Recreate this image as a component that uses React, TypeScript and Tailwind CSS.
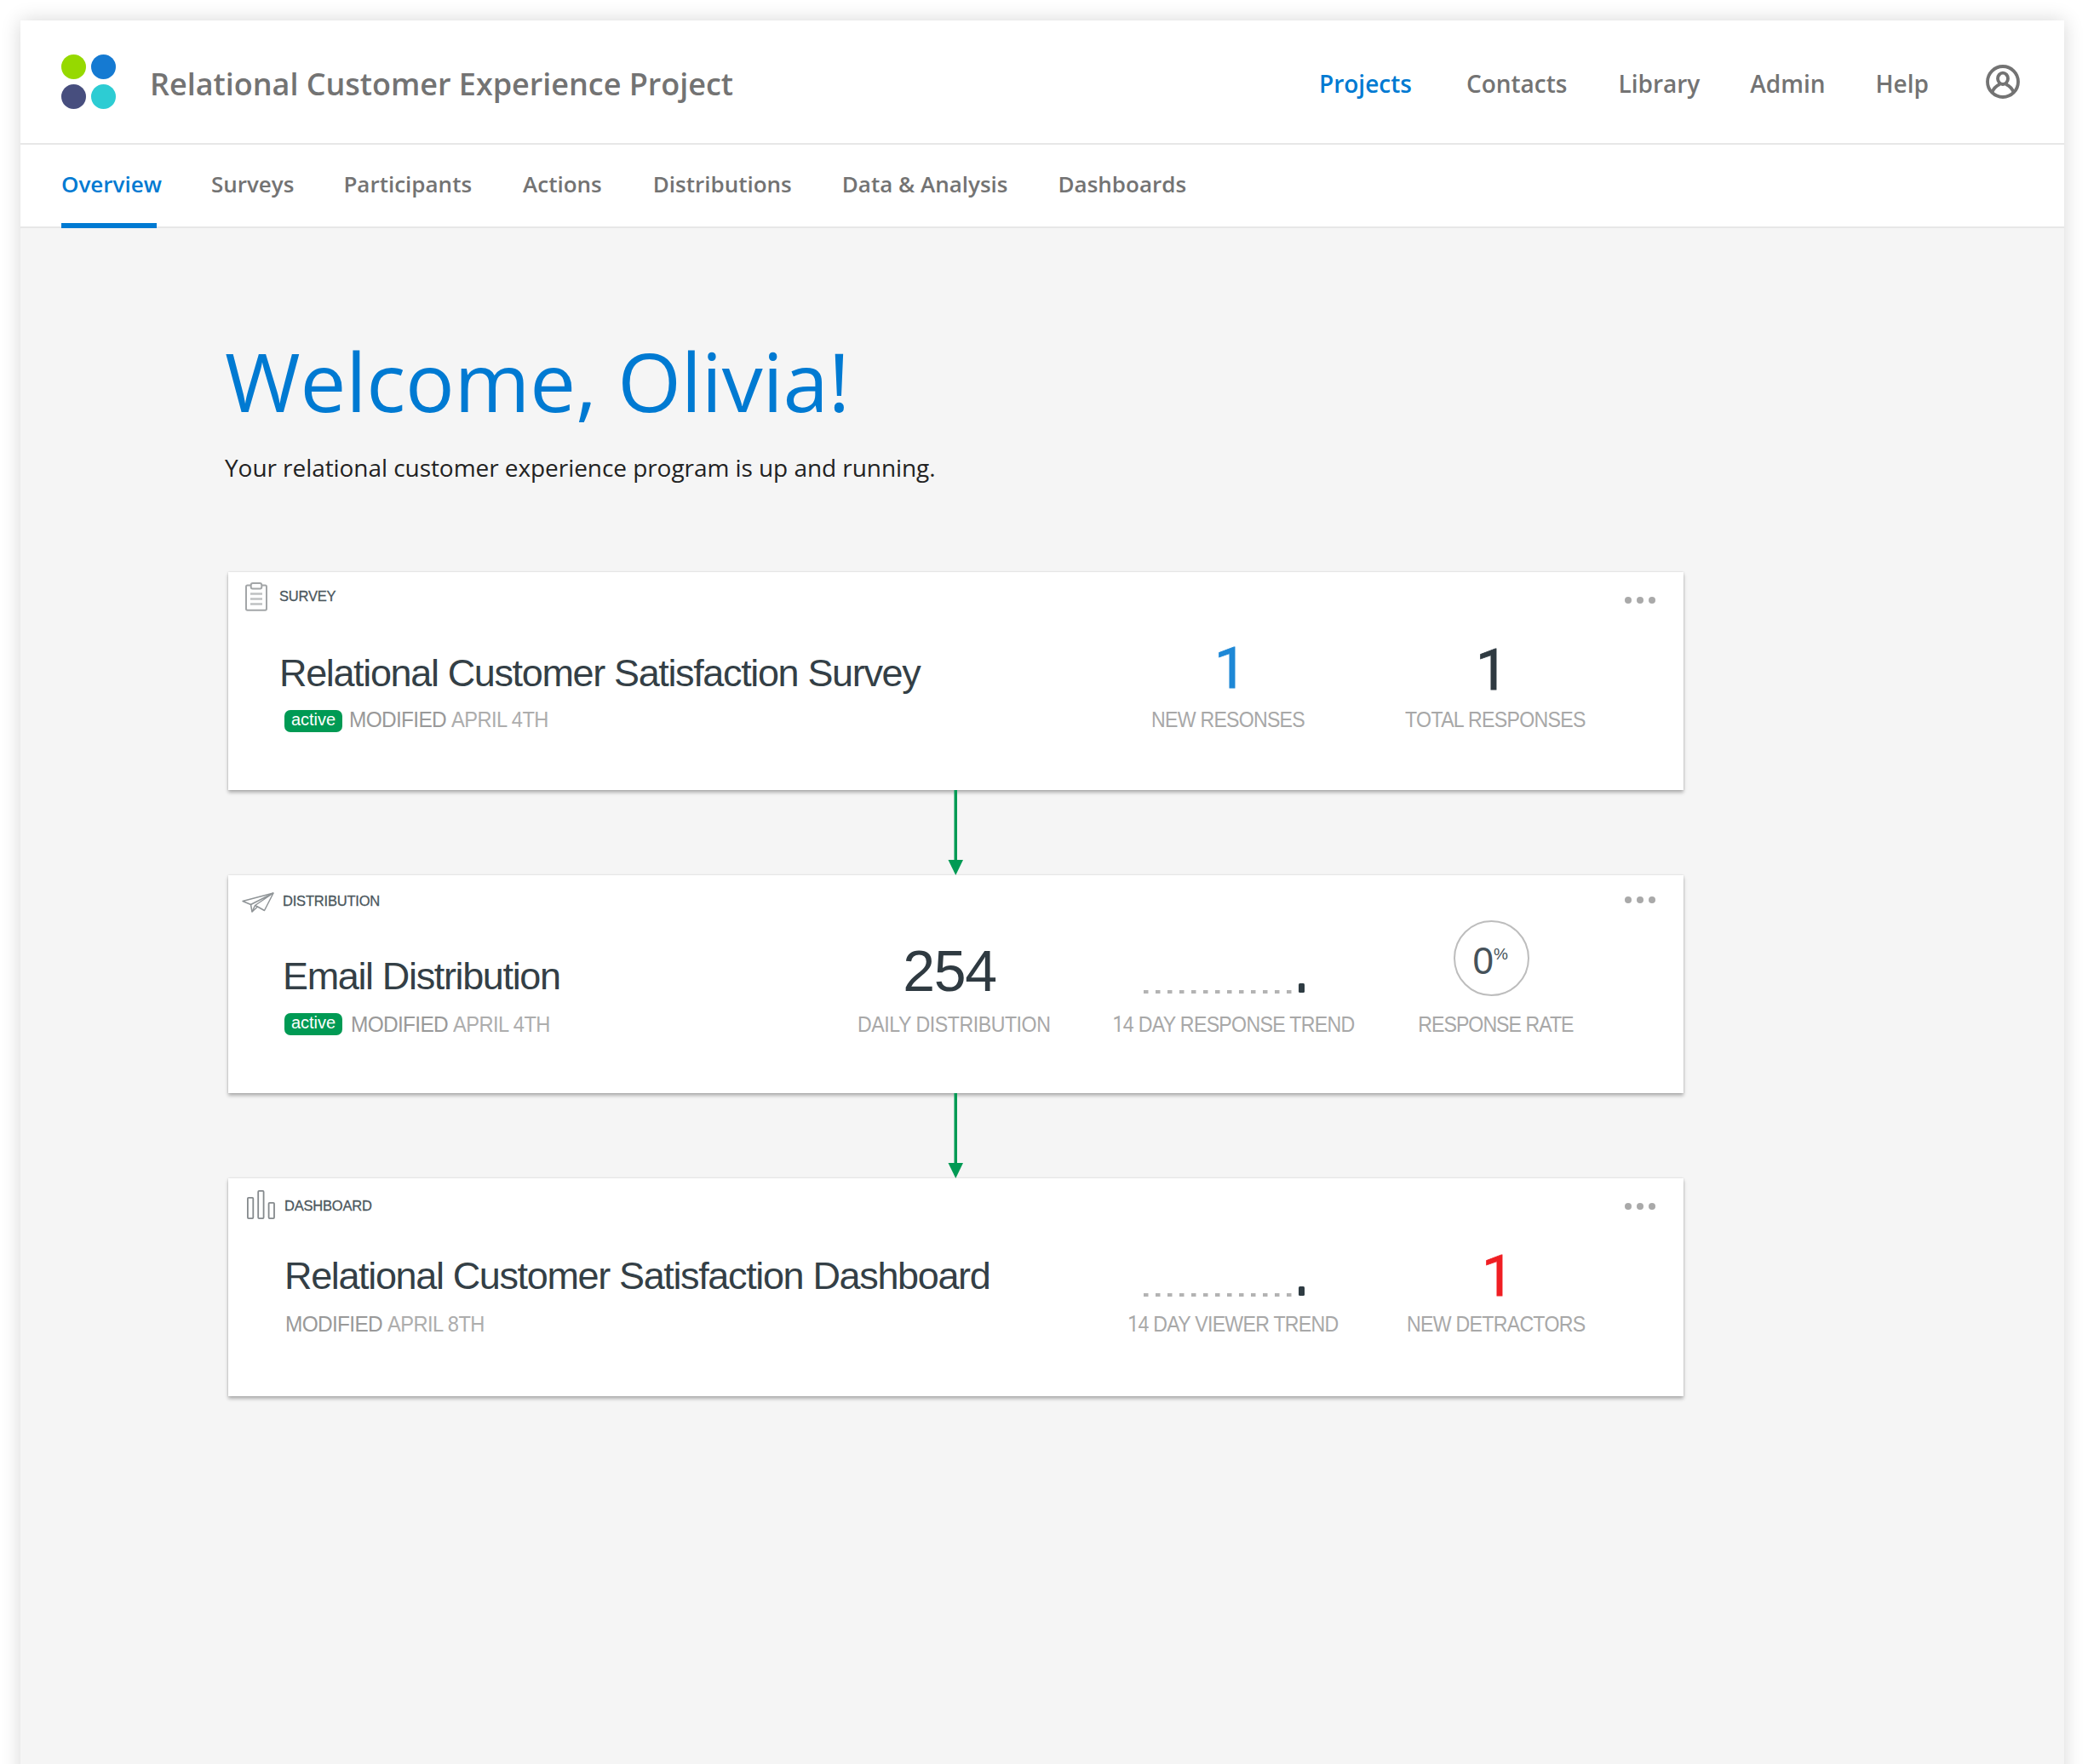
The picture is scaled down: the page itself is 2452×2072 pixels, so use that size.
import type { ReactNode } from 'react'

const navItems = [
  { label: 'Projects', className: 'text-[#007ad2]' },
  { label: 'Contacts', className: 'ml-16' },
  { label: 'Library', className: 'ml-15' },
  { label: 'Admin', className: 'ml-[59px]' },
  { label: 'Help', className: 'ml-[59px]' },
]

const tabs = [
  { label: 'Overview', className: 'relative text-[#007ad2]' },
  { label: 'Surveys', className: 'ml-[58px]' },
  { label: 'Participants', className: 'ml-[58px]' },
  { label: 'Actions', className: 'ml-[60px]' },
  { label: 'Distributions', className: 'ml-[60px]' },
  { label: 'Data & Analysis', className: 'ml-[59px]' },
  { label: 'Dashboards', className: 'ml-[59px]' },
]

function Logo() {
  return (
    <div className="grid h-16 w-16 grid-cols-2 gap-[6px]">
      <span className="rounded-full bg-[#96d900]" />
      <span className="rounded-full bg-[#157ad2]" />
      <span className="rounded-full bg-[#474e7e]" />
      <span className="rounded-full bg-[#2dccd3]" />
    </div>
  )
}

function UserIcon() {
  return (
    <svg className="h-10 w-10" viewBox="0 0 120 120" fill="none" stroke="#737373" strokeWidth="11.5">
      <circle cx="60" cy="60" r="54" />
      <ellipse cx="60" cy="49" rx="18" ry="20" />
      <path d="M22 98C27 84 38 74 49 69M98 98C93 84 82 74 71 69" />
    </svg>
  )
}

function ClipboardIcon() {
  return (
    <svg className="h-[34px] w-[26px]" viewBox="0 0 26 34" fill="none" stroke="#a3a6a8" strokeWidth="2">
      <path d="M7 3.5H2.6Q1 3.5 1 5.2V31Q1 32.8 2.6 32.8H23.4Q25 32.8 25 31V5.2Q25 3.5 23.4 3.5H19" />
      <path d="M9 1H17Q19.3 1 19.3 3.4V5.4Q19.3 7.4 17.3 7.4H8.7Q6.7 7.4 6.7 5.4V3.4Q6.7 1 9 1Z" />
      <path d="M6 13.5H20M6 19.500H20M6 25.500H20" stroke="#bfc1c2" strokeWidth="2.500" />
    </svg>
  )
}

function PlaneIcon() {
  return (
    <svg className="h-6 w-[38px]" viewBox="0 0 38 24" fill="none" stroke="#8f9497" strokeWidth="1.5" strokeLinejoin="round">
      <path d="M1 10.5L37 1L26.5 21.5L18.5 17L12 23L10.5 14.5Z" />
      <path d="M37 1L10.5 14.5M37 1L15.5 15.5L12 23M15.5 15.5L18.5 17" />
    </svg>
  )
}

function BarsIcon() {
  return (
    <svg className="h-[34px] w-[33px]" viewBox="0 0 33 34" fill="none" stroke="#858a8d" strokeWidth="1.8">
      <rect x="0.9" y="8.8" width="6.4" height="24.3" rx="1" />
      <rect x="13.2" y="0.9" width="6.4" height="32.2" rx="1" />
      <rect x="25.6" y="14.8" width="6.4" height="18.3" rx="1" />
    </svg>
  )
}

function MoreDots({ className }: { className: string }) {
  return (
    <div className={`ml-auto mr-[33px] flex gap-[6px] ${className}`}>
      <span className="size-2 rounded-full bg-[#a9a9a9]" />
      <span className="size-2 rounded-full bg-[#a9a9a9]" />
      <span className="size-2 rounded-full bg-[#a9a9a9]" />
    </div>
  )
}

function Trend({ className }: { className: string }) {
  return (
    <svg className={`h-3 w-[190px] ${className}`} viewBox="0 0 190 12">
      {Array.from({ length: 13 }, (_, i) => (
        <rect key={i} x={i * 14} y="8" width="5.5" height="4" fill="#b3b3b3" />
      ))}
      <rect x="182" y="0" width="7" height="11" rx="1.5" fill="#2f3c43" />
    </svg>
  )
}

function Connector() {
  return (
    <svg className="relative ml-1 h-[100px] w-[1709px]" viewBox="0 0 1709 100" fill="#009a54">
      <rect x="852.5" y="0" width="3.5" height="86" />
      <path d="M845.5 82H863L854.3 100Z" />
    </svg>
  )
}

function Card({ children }: { children: ReactNode }) {
  return (
    <section className="ml-1 flex h-64 w-[1709px] flex-col bg-white font-['Liberation_Sans',sans-serif] shadow-[0_3px_4px_rgba(0,0,0,0.28),0_0_2px_rgba(0,0,0,0.15)]">
      {children}
    </section>
  )
}

function CardTop({ icon, label, labelClass, dotsClass }: { icon: ReactNode; label: string; labelClass: string; dotsClass: string }) {
  return (
    <div className="flex h-[50px] shrink-0 items-start">
      {icon}
      <span className={`text-[16.5px] leading-5 tracking-[-0.200px] text-[#4b575d] [-webkit-text-stroke:0.3px_#4b575d] ${labelClass}`}>{label}</span>
      <MoreDots className={dotsClass} />
    </div>
  )
}

function Title({ children }: { children: string }) {
  return (
    <h2 className="translate-y-px whitespace-nowrap text-[45px] leading-[52px] tracking-[-1.360px] text-[#343f46]">{children}</h2>
  )
}

function Modified({ date }: { date: string }) {
  return (
    <div className="flex text-[26px] leading-8">
      <span className="w-[120px] origin-left scale-x-[0.94] tracking-[-0.730px] text-[#999999]">MODIFIED</span>
      <span className="origin-left scale-x-[0.91] whitespace-nowrap tracking-[-0.600px] text-[#adadad]">{date}</span>
    </div>
  )
}

function Badge({ className }: { className: string }) {
  return (
    <span className={`flex h-[26px] w-[68px] shrink-0 justify-center rounded-[7px] bg-[#009a54] text-xl leading-[22px] text-white ${className}`}>
      active
    </span>
  )
}

function StatLabel({ children, className }: { children: ReactNode; className: string }) {
  return <div className={`scale-x-[0.89] whitespace-nowrap text-[26px] leading-8 text-[#a8a8a8] ${className}`}>{children}</div>
}

function One({ className }: { className: string }) {
  return (
    <div className={`font-['Roboto',sans-serif] text-[67.5px] leading-[68px] [-webkit-text-stroke:0.8px_currentColor] ${className}`}>
      1
    </div>
  )
}

function SmallOne() {
  return <span className="font-['Roboto',sans-serif]">1</span>
}

export default function App() {
  return (
    <div className="h-[2072px] w-[2452px] overflow-hidden bg-white pl-6 pt-6 font-['Open_Sans',sans-serif]">
      <div className="h-[2100px] w-[2400px] bg-[#f5f5f5] shadow-[0_0_22px_rgba(0,0,0,0.16)]">
        <header className="flex h-[146px] items-center border-b-2 border-[#e7e7e7] bg-white pl-12 pr-[52px]">
          <Logo />
          <h1 className="ml-10 pt-[6px] text-4xl font-semibold tracking-[-0.030px] text-[#737373]">Relational Customer Experience Project</h1>
          <nav className="ml-auto flex pt-[3px] text-[28px] font-semibold leading-10 text-[#737373]">
            {navItems.map((item) => (
              <a key={item.label} className={item.className}>
                {item.label}
              </a>
            ))}
          </nav>
          <div className="ml-[67px]">
            <UserIcon />
          </div>
        </header>

        <div className="flex h-[98px] border-b-2 border-[#e7e7e7] bg-white pl-12 text-[26px] font-semibold leading-[92px] text-[#737373]">
          {tabs.map((tab, i) => (
            <a key={tab.label} className={tab.className}>
              {tab.label}
              {i === 0 && <span className="absolute left-0 top-[92px] h-[6px] w-28 bg-[#007ad2]" />}
            </a>
          ))}
        </div>

        <main className="pl-60 pt-[119px]">
          <h2 className="text-8xl leading-[120px] tracking-[-0.200px] text-[#007ad2]">Welcome, Olivia!</h2>
          <p className="mb-[103px] mt-[22px] text-[28px] leading-10 tracking-[-0.060px] text-[#222222]">
            Your relational customer experience program is up and running.
          </p>

          <Card>
            <CardTop
              icon={<div className="ml-5 mt-3"><ClipboardIcon /></div>}
              label="SURVEY"
              labelClass="ml-[14px] mt-[18px]"
              dotsClass="mt-[29px]"
            />
            <div className="flex pr-[71px]">
              <div className="flex-1 pt-[42px]">
                <div className="pl-[60px]"><Title>Relational Customer Satisfaction Survey</Title></div>
                <div className="mt-[13px] flex pl-[66px]">
                  <Badge className="mt-[5px]" />
                  <div className="ml-2"><Modified date="APRIL 4TH" /></div>
                </div>
              </div>
              <div className="flex w-[316px] flex-col items-center pr-3">
                <div className="h-[107px] pt-[29px]"><One className="translate-x-[3px] text-[#1e88d6]" /></div>
                <StatLabel className="tracking-[-0.860px]">NEW RESONSES</StatLabel>
              </div>
              <div className="flex w-[300px] flex-col items-center">
                <div className="h-[107px] pt-[31px]"><One className="-translate-x-1 text-[#2f3a41]" /></div>
                <StatLabel className="tracking-[-0.780px]">TOTAL RESPONSES</StatLabel>
              </div>
            </div>
          </Card>
          <Connector />

          <Card>
            <CardTop
              icon={<div className="ml-4 mt-5"><PlaneIcon /></div>}
              label="DISTRIBUTION"
              labelClass="ml-[10px] mt-5"
              dotsClass="mt-[25px]"
            />
            <div className="flex pr-[71px]">
              <div className="flex-1 pt-[42px]">
                <div className="pl-16"><Title>Email Distribution</Title></div>
                <div className="mt-[15px] flex pl-[66px]">
                  <Badge className="mt-[3px]" />
                  <div className="ml-[10px]"><Modified date="APRIL 4TH" /></div>
                </div>
              </div>
              <div className="flex w-[340px] flex-col items-center">
                <div className="h-[109px] pt-7 text-[68px] leading-[68px] tracking-[-1.300px] text-[#2f3a41]">
                  <div className="-translate-x-[5px]">254</div>
                </div>
                <StatLabel className="tracking-[-0.500px]">DAILY DISTRIBUTION</StatLabel>
              </div>
              <div className="flex w-[316px] flex-col items-center">
                <div className="h-[109px] pt-[77px]"><Trend className="-translate-x-[10px]" /></div>
                <StatLabel className="tracking-[-0.780px]"><SmallOne />4 DAY RESPONSE TREND</StatLabel>
              </div>
              <div className="flex w-[300px] flex-col items-center">
                <div className="h-[109px] pt-[3px]">
                  <div className="flex size-[89px] -translate-x-[5px] items-start rounded-full border-2 border-[#bdbdbd] pl-[21px] text-[#46525a]">
                    <span className="mt-6 text-[44px] leading-[44px]">0</span>
                    <span className="mt-7 text-[19px] leading-5">%</span>
                  </div>
                </div>
                <StatLabel className="tracking-[-1.100px]">RESPONSE RATE</StatLabel>
              </div>
            </div>
          </Card>
          <Connector />

          <Card>
            <CardTop
              icon={<div className="ml-[22px] mt-[14px]"><BarsIcon /></div>}
              label="DASHBOARD"
              labelClass="ml-[11px] mt-[22px]"
              dotsClass="mt-[29px]"
            />
            <div className="flex pr-[71px]">
              <div className="flex-1 pt-[38px]">
                <div className="pl-[66px]"><Title>Relational Customer Satisfaction Dashboard</Title></div>
                <div className="mt-[15px] pl-[67px]"><Modified date="APRIL 8TH" /></div>
              </div>
              <div className="flex w-[316px] flex-col items-center">
                <div className="h-[105px] pt-[77px]"><Trend className="-translate-x-[10px]" /></div>
                <StatLabel className="tracking-[-0.830px]"><SmallOne />4 DAY VIEWER TREND</StatLabel>
              </div>
              <div className="flex w-[300px] flex-col items-center">
                <div className="h-[105px] pt-[31px]"><One className="translate-x-[3px] text-[#f01e23]" /></div>
                <StatLabel className="translate-x-px tracking-[-0.800px]">NEW DETRACTORS</StatLabel>
              </div>
            </div>
          </Card>
        </main>
      </div>
    </div>
  )
}
